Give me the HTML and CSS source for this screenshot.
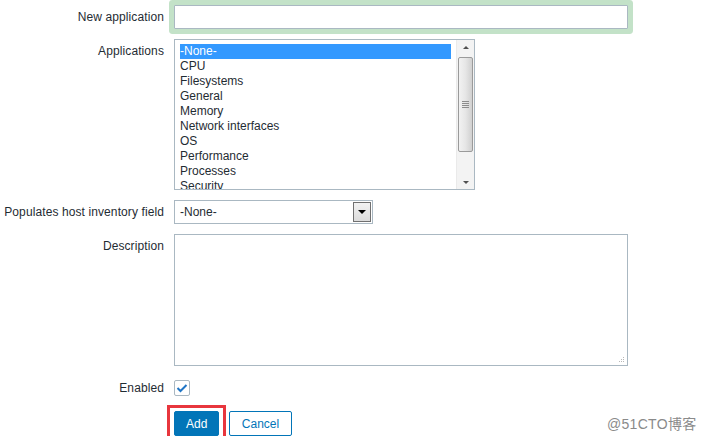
FILE: index.html
```html
<!DOCTYPE html>
<html lang="en">
<head>
  <meta charset="UTF-8">
  <title>Application</title>
  <link rel="stylesheet" href="styles.css">
</head>
<body>
  <div class="form">
    <label class="lbl lbl-mid">New application</label>
    <div class="field"><input type="text" class="text wide glow"></div>

    <label class="lbl lbl-top">Applications</label>
    <div class="field">
      <div class="listbox">
        <div class="items">
          <div class="item selected">-None-</div>
          <div class="item">CPU</div>
          <div class="item">Filesystems</div>
          <div class="item">General</div>
          <div class="item">Memory</div>
          <div class="item">Network interfaces</div>
          <div class="item">OS</div>
          <div class="item">Performance</div>
          <div class="item">Processes</div>
          <div class="item">Security</div>
        </div>
        <div class="scrollbar">
          <div class="arrow up"></div>
          <div class="thumb"><span class="grip"></span></div>
          <div class="arrow down"></div>
        </div>
      </div>
    </div>

    <label class="lbl lbl-mid">Populates host inventory field</label>
    <div class="field">
      <div class="dropdown">
        <span class="value">-None-</span>
        <span class="drop-btn"><span class="tri"></span></span>
      </div>
    </div>

    <label class="lbl lbl-top">Description</label>
    <div class="field">
      <div class="textarea">
        <span class="resize">
          <svg width="7" height="7" viewBox="0 0 7 7"><g fill="#b8b8b8"><rect x="5" y="0" width="1" height="1"/><rect x="3" y="2" width="1" height="1"/><rect x="5" y="2" width="1" height="1"/><rect x="1" y="4" width="1" height="1"/><rect x="3" y="4" width="1" height="1"/><rect x="5" y="4" width="1" height="1"/></g></svg>
        </span>
      </div>
    </div>

    <label class="lbl lbl-mid row-enabled">Enabled</label>
    <div class="field row-enabled">
      <span class="checkbox">
        <svg width="12" height="10" viewBox="0 0 12 10"><path d="M1.5 5 L4.5 8 L10.5 2" fill="none" stroke="#1f75c6" stroke-width="2"/></svg>
      </span>
    </div>

    <div class="row-buttons"></div>
    <div class="field row-buttons buttons">
      <button class="btn btn-main">Add</button>
      <button class="btn btn-alt">Cancel</button>
    </div>
  </div>

  <div class="watermark">@51CTO博客</div>
</body>
</html>
```

FILE: styles.css
```css
:root {
  --text: #1f2c33;
  --border: #aab8c2;
  --blue: #0275b8;
  --select: #3399ff;
  --glow: #c3e2c8;
}

body {
  margin: 0;
  font-family: "Liberation Sans", Arial, sans-serif;
  font-size: 12px;
  color: var(--text);
  background: white;
}
.form {
  display: grid;
  grid-template-columns: 164px auto;
  column-gap: 10px;
  row-gap: 10px;
  justify-content: start;
  padding-top: 5px;
}
.lbl {
  text-align: right;
  line-height: 14px;
  letter-spacing: 0.1px;
}
.lbl-mid { align-self: center; }
.lbl-top { padding-top: 5px; }
.field { display: flex; }

.text {
  box-sizing: border-box;
  height: 24px;
  border: 1px solid var(--border);
  padding: 0 5px;
  font: inherit;
  margin: 0;
}
.wide { width: 454px; }
.glow {
  box-shadow: 0 0 0 5px var(--glow);
  border-radius: 1px;
  outline: none;
}

/* application list */
.listbox {
  box-sizing: border-box;
  width: 301px;
  height: 151px;
  border: 1px solid var(--border);
  display: flex;
  overflow: hidden;
}
.items {
  flex: 1;
  padding: 4px 5px 0 5px;
  overflow: hidden;
}
.item {
  line-height: 15px;
  height: 15px;
  white-space: nowrap;
}
.item.selected {
  background: var(--select);
  color: white;
}
.scrollbar {
  width: 17px;
  background: #f3f3f3;
  border-left: 1px solid #eaeaea;
  display: flex;
  flex-direction: column;
  align-items: center;
}
.arrow {
  width: 0;
  height: 0;
  border-left: 3px solid transparent;
  border-right: 3px solid transparent;
}
.arrow.up {
  border-bottom: 3px solid #505050;
  margin: 6px 0 8px;
}
.arrow.down {
  border-top: 3px solid #505050;
  margin-top: auto;
  margin-bottom: 5px;
}
.thumb {
  box-sizing: border-box;
  width: 15px;
  height: 95px;
  border: 1px solid #9a9a9a;
  border-radius: 2px;
  background: linear-gradient(to right, #f2f2f2, #e6e6e6 50%, #d0d0d0);
  display: flex;
  align-items: center;
  justify-content: center;
}
.grip {
  width: 7px;
  height: 7px;
  background: repeating-linear-gradient(to bottom, #8c8c8c 0, #8c8c8c 1px, transparent 1px, transparent 2px);
}

/* inventory field */
.dropdown {
  box-sizing: border-box;
  width: 199px;
  height: 24px;
  border: 1px solid var(--border);
  display: flex;
  align-items: center;
  padding: 1px;
}
.dropdown .value {
  flex: 1;
  padding-left: 4px;
}
.drop-btn {
  box-sizing: border-box;
  width: 18px;
  height: 20px;
  border: 1px solid #707070;
  background: linear-gradient(#f2f2f2, #dcdcdc);
  display: flex;
  align-items: center;
  justify-content: center;
}
.tri {
  width: 0;
  height: 0;
  border-left: 4px solid transparent;
  border-right: 4px solid transparent;
  border-top: 4px solid #000;
}

.textarea {
  box-sizing: border-box;
  width: 454px;
  height: 132px;
  border: 1px solid var(--border);
  position: relative;
}
.resize {
  position: absolute;
  right: 2px;
  bottom: 1px;
  line-height: 0;
}

.row-enabled { margin-top: 4px; }
.checkbox {
  box-sizing: border-box;
  width: 16px;
  height: 16px;
  border: 1px solid var(--border);
  border-radius: 2px;
  display: flex;
  align-items: center;
  justify-content: center;
}

.row-buttons { margin-top: 5px; }
.buttons { gap: 10px; }
.btn {
  font: inherit;
  height: 25px;
  border-radius: 2px;
  padding: 0 11px;
  cursor: pointer;
}
.btn-main {
  position: relative;
  background: var(--blue);
  border: 1px solid var(--blue);
  color: white;
  width: 45px;
}
/* red highlight box around the button */
.btn-main::after {
  content: "";
  position: absolute;
  left: -8px;
  right: -8px;
  top: -7px;
  bottom: -7px;
  border: 3px solid #e8363d;
}
.btn-alt {
  background: white;
  border: 1px solid var(--blue);
  color: var(--blue);
  width: 63px;
}

.watermark {
  position: absolute;
  left: 607px;
  top: 413px;
  font-size: 14px;
  letter-spacing: 0.3px;
  color: #8a8a8a;
  font-family: "Liberation Sans", "Noto Sans CJK SC", sans-serif;
}
```
